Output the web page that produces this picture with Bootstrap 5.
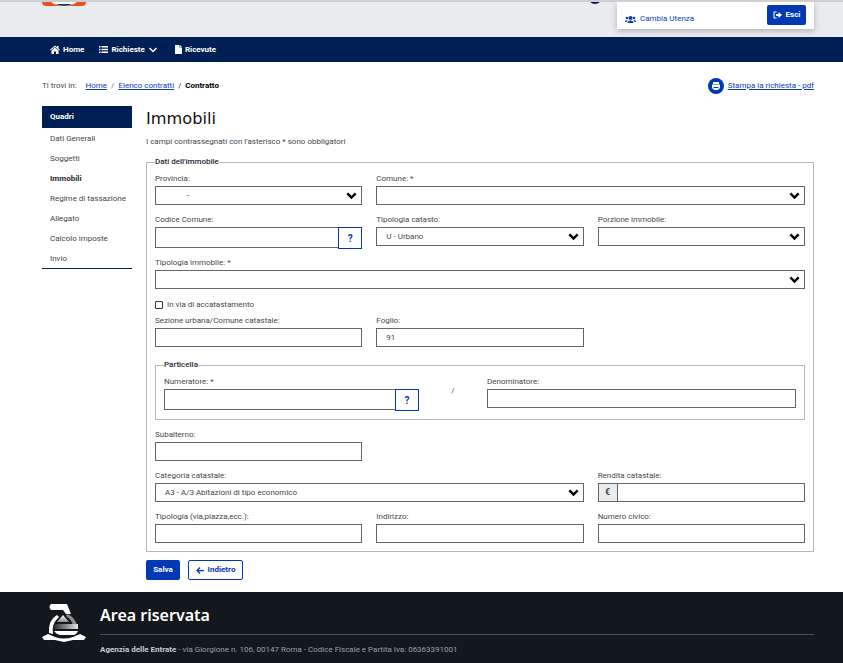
<!DOCTYPE html>
<html lang="it">
<head>
    <meta charset="UTF-8">
    <title>Contratto | Immobili</title>
    <link rel="stylesheet" href="https://cdn.jsdelivr.net/npm/bootstrap@5.3.0/dist/css/bootstrap.min.css">
    <style>
        body {
            font-family: Roboto, "Noto Sans", sans-serif;
            font-size: 8px;
            color: #3f474d;
            background: #fff;
        }
        a { color: #0b3bb5; }
        .top-strip {
            height: 37px;
            background: #e9ebef;
            border-top: 2px solid #cfcfcf;
            position: relative;
            overflow: hidden;
            padding: 0 29px 0 42px;
        }
        .top-logo { width: 44px; height: 4px; display: block; }
        .top-name {
            margin-left: 14px;
            margin-top: -11px;
            font-size: 13px;
            line-height: 14px;
            color: #1c2733;
        }
        .top-dot {
            position: absolute; left: 588px; top: -12px;
            width: 14px; height: 14px; border-radius: 50%;
            background: #001f54;
        }
        .user-box {
            position: absolute; left: 617px; top: 0;
            width: 197px; height: 27px;
            background: #fff;
            box-shadow: 0 2px 6px rgba(0,0,0,.25);
            padding: 3px 8px 0;
        }
        .user-link { color: #0b3bb5; font-size: 8px; text-decoration: none; height: 20px; padding-top: 8px; }
        .btn-esci, .btn-salva {
            background: #0039b3; color: #fff; border: 0; border-radius: 2px;
            font-size: 8px; font-weight: 700;
        }
        .btn-esci { width: 39px; height: 20px; padding: 0; }
        .main-nav { background: #001f54; height: 25px; padding: 0 42px 0 50px; }
        .main-nav a {
            color: #fff; font-size: 8px; font-weight: 700; text-decoration: none;
            margin-right: 15px;
        }
        .main-nav svg { margin-right: 3px; }
        .page-body { padding: 0 29px 0 42px; }
        .crumb-row { height: 44px; padding-top: 4px; }
        .crumb-row .breadcrumb { --bs-breadcrumb-margin-bottom: 0; --bs-breadcrumb-item-padding-x: 4px; font-size: 8px; }
        .crumb-label { margin-right: 9px; }
        .print-link { font-size: 8px; }
        .print-icon { margin-right: 4px; }
        .side-col { width: 90px; flex: none; margin-right: 14px; }
        .side-menu { border-bottom: 1px solid #001f54; height: 163px; }
        .side-menu a {
            display: block; height: 20px; line-height: 21px; padding-left: 8px;
            color: #3f474d; text-decoration: none; font-size: 8px;
        }
        .side-menu .side-head {
            height: 22px; line-height: 22px; background: #001f54; color: #fff; font-weight: 700;
        }
        .side-menu .side-now { font-weight: 700; color: #1c2733; }
        .main-col { flex: 1; min-width: 0; }
        .page-title {
            font-family: "DejaVu Sans", sans-serif;
            font-size: 16.2px; line-height: 24px; margin: 1px 0 0; color: #111; font-weight: 400;
        }
        .req-note { margin: 5px 0 0; line-height: 11px; height: 21px; }
        .box-set {
            border: 1px solid #b8b8b8;
            padding: 6px 8px 8px;
            margin: 0;
        }
        .box-legend {
            float: none; width: auto; font-size: 8px; line-height: 10px;
            margin: -13px 0 0 0; padding: 0; background: #fff;
            display: block; color: #1c2733; font-weight: 500;
        }
        .form-lines { --bs-gutter-x: 14px; --bs-gutter-y: 0; }
        .fld { height: 41px; }
        .fld-tall { height: 43px; }
        .fld-last { height: 32px; }
        .fld label { display: block; line-height: 10px; height: 13px; padding-top: 1px; margin: 0; font-size: 8px; }
        .fld .form-control, .fld .form-select {
            height: 19px; min-height: 0; border: 1px solid #666; border-radius: 0;
            font-size: 8px; padding: 0 9px; color: #3f474d; box-shadow: none;
        }
        .fld .form-select {
            background-size: 11px 11px; background-position: right 4px center; padding-right: 20px;
            background-image: url("data:image/svg+xml,%3csvg xmlns='http://www.w3.org/2000/svg' viewBox='0 0 16 16'%3e%3cpath fill='none' stroke='%23000' stroke-width='3.500' d='M2 5l6 6 6-6'/%3e%3c/svg%3e");
        }
        .help-btn {
            width: 24px; height: 22px; padding: 0; border: 1px solid #0039b3; border-radius: 0;
            background: #fff; color: #0039b3; font-weight: 700; font-size: 10px; flex: none;
        }
        .fld .help-line .form-control { height: 21px; border-right: 0; }
        .check-line { height: 17px; padding-bottom: 4px; line-height: 10px; }
        .check-line input { width: 8px; height: 8px; margin: 0 4px 0 0; border: 1px solid #333; border-radius: 1px; appearance: none; }
        .part-set {
            border: 1px solid #b8b8b8; padding: 6px 8px 2px; margin: 4px 0 9px;
        }
        .part-num { width: 255px; flex: none; }
        .part-slash { width: 68px; text-align: center; flex: none; padding-top: 9px; }
        .part-den { flex: 1; }
        .sub-field { width: 207px; }
        .euro-tag {
            width: 19px; height: 19px; background: #e9ebef; border: 1px solid #666; border-right: 0;
            flex: none; text-align: center; line-height: 17px; font-size: 9px; font-weight: 700;
        }
        .btn-salva { width: 34px; height: 20px; padding: 0; }
        .btn-back {
            width: 55px; height: 20px; padding: 0; border: 1px solid #0039b3; border-radius: 2px;
            background: #fff; color: #0039b3; font-size: 8px; font-weight: 700; margin-left: 8px;
        }
        .action-row { margin-top: 8px; }
        .site-foot { margin-top: 12px; height: 71px; background: #13181c; color: #9aa0a6; padding: 0 29px 0 42px; }
        .foot-logo { width: 44px; height: 38px; margin-top: 12px; flex: none; }
        .foot-right { margin-left: 14px; flex: 1; min-width: 0; }
        .foot-title { font-family: "Noto Sans", sans-serif; color: #fff; font-size: 16px; font-weight: 600; line-height: 20px; margin: 13px 0 0; height: 29px; }
        .foot-right hr { margin: 0; border-color: #4a4f53; opacity: 1; }
        .foot-text { margin: 10px 0 0; line-height: 10px; }
        .foot-text b { color: #c9cdd1; }
    </style>
</head>
<body>

<div class="top-strip d-flex">
    <svg class="top-logo" viewBox="0 0 44 4">
        <path d="M0 0H44V1Q43 4 40 4H4Q1 4 0 1z" fill="#e8501e"/>
        <path d="M9 0H35Q30 4 22 4T9 0z" fill="#fff"/>
        <path d="M14 2H30Q27 4 22 4T14 2z" fill="#1c3f7c"/>
    </svg>
    <div class="top-name">RLI Web</div>
    <div class="top-dot"></div>
    <div class="user-box d-flex justify-content-between">
        <a class="user-link d-flex align-items-center" href="#">
            <svg class="me-1" width="11" height="9" viewBox="0 0 22 18" fill="#0b3bb5"><circle cx="11" cy="6" r="4"/><circle cx="4" cy="6" r="2.6"/><circle cx="18" cy="6" r="2.6"/><path d="M5 16q0-5 6-5t6 5zM0 13q0-3 4-3l1 1q-2 1-2 3H0zM22 13q0-3-4-3l-1 1q2 1 2 3h3z"/></svg>
            Cambia Utenza
        </a>
        <button class="btn-esci d-flex align-items-center justify-content-center gap-1" type="button">
            <svg width="9" height="8" viewBox="0 0 18 16" fill="#fff"><path d="M11 2l7 6-7 6v-4H6V6h5zM7 1v2H3v10h4v2H1V1z"/></svg>
            Esci
        </button>
    </div>
</div>

<nav class="main-nav d-flex align-items-center">
    <a href="#" class="d-flex align-items-center">
        <svg width="10" height="9" viewBox="0 0 20 18" fill="#fff"><path d="M10 1L0 9.500l1.300 1.400L10 3.600l8.700 7.300L20 9.500l-3-2.600V2h-3v2.400zM3 11v7h5v-5h4v5h5v-7l-7-5.800z"/></svg>
        Home
    </a>
    <a href="#" class="d-flex align-items-center">
        <svg width="9" height="7" viewBox="0 0 18 14" fill="#fff"><path d="M0 0h3v3H0zM5 0h13v3H5zM0 5.500h3v3H0zM5 5.500h13v3H5zM0 11h3v3H0zM5 11h13v3H5z"/></svg>
        Richieste
        <svg class="ms-1" width="8" height="6" viewBox="0 0 16 12"><path fill="none" stroke="#fff" stroke-width="3" d="M1 2l7 7 7-7"/></svg>
    </a>
    <a href="#" class="d-flex align-items-center">
        <svg width="7" height="9" viewBox="0 0 14 18" fill="#fff"><path d="M0 0h9v5h5v13H0zM10 0l4 4h-4z"/></svg>
        Ricevute
    </a>
</nav>

<div class="page-body">
    <div class="crumb-row d-flex justify-content-between align-items-center">
        <div class="d-flex align-items-center">
            <span class="crumb-label">Ti trovi in:</span>
            <ol class="breadcrumb">
                <li class="breadcrumb-item"><a href="#">Home</a></li>
                <li class="breadcrumb-item"><a href="#">Elenco contratti</a></li>
                <li class="breadcrumb-item active text-black fw-bold">Contratto</li>
            </ol>
        </div>
        <a class="print-link d-flex align-items-center" href="#">
            <svg class="print-icon" width="16" height="16" viewBox="0 0 16 16"><circle cx="8" cy="8" r="8" fill="#0039b3"/><path fill="#fff" d="M5 4h6v2H5zM4 6.500h8v4h-1.500V9h-5v1.500H4zM5.500 10h5v2h-5z"/></svg>
            Stampa la richiesta - pdf
        </a>
    </div>

    <div class="d-flex">
        <div class="side-col">
            <div class="side-menu">
                <a href="#" class="side-head">Quadri</a>
                <a href="#">Dati Generali</a>
                <a href="#">Soggetti</a>
                <a href="#" class="side-now">Immobili</a>
                <a href="#">Regime di tassazione</a>
                <a href="#">Allegato</a>
                <a href="#">Calcolo imposte</a>
                <a href="#">Invio</a>
            </div>
        </div>
        <div class="main-col">
            <h1 class="page-title">Immobili</h1>
            <p class="req-note">I campi contrassegnati con l'asterisco * sono obbligatori</p>
            <fieldset class="box-set">
                <legend class="box-legend">Dati dell'immobile</legend>
                <div class="row form-lines">
                    <div class="col-4 fld">
                        <label>Provincia:</label>
                        <select class="form-select"><option>&nbsp;&nbsp;&nbsp;&nbsp;&nbsp;&nbsp;&nbsp;&nbsp;&nbsp;&nbsp;&nbsp;-</option></select>
                    </div>
                    <div class="col-8 fld">
                        <label>Comune: *</label>
                        <select class="form-select"><option></option></select>
                    </div>
                    <div class="col-4 fld fld-tall">
                        <label>Codice Comune:</label>
                        <div class="d-flex help-line">
                            <input class="form-control" type="text">
                            <button class="help-btn" type="button">?</button>
                        </div>
                    </div>
                    <div class="col-4 fld fld-tall">
                        <label>Tipologia catasto:</label>
                        <select class="form-select"><option>U - Urbano</option></select>
                    </div>
                    <div class="col-4 fld fld-tall">
                        <label>Porzione immobile:</label>
                        <select class="form-select"><option></option></select>
                    </div>
                    <div class="col-12 fld">
                        <label>Tipologia immobile: *</label>
                        <select class="form-select"><option></option></select>
                    </div>
                    <div class="col-12 check-line d-flex align-items-center">
                        <input type="checkbox" id="accat"><span>In via di accatastamento</span>
                    </div>
                    <div class="col-4 fld">
                        <label>Sezione urbana/Comune catastale:</label>
                        <input class="form-control" type="text">
                    </div>
                    <div class="col-4 fld">
                        <label>Foglio:</label>
                        <input class="form-control" type="text" value="91">
                    </div>
                </div>
                <fieldset class="part-set">
                    <legend class="box-legend">Particella</legend>
                    <div class="d-flex">
                        <div class="part-num fld">
                            <label>Numeratore: *</label>
                            <div class="d-flex help-line">
                                <input class="form-control" type="text">
                                <button class="help-btn" type="button">?</button>
                            </div>
                        </div>
                        <div class="part-slash">/</div>
                        <div class="part-den fld">
                            <label>Denominatore:</label>
                            <input class="form-control" type="text">
                        </div>
                    </div>
                </fieldset>
                <div class="sub-field fld">
                    <label>Subalterno:</label>
                    <input class="form-control" type="text">
                </div>
                <div class="row form-lines">
                    <div class="col-8 fld">
                        <label>Categoria catastale:</label>
                        <select class="form-select"><option>A3 - A/3 Abitazioni di tipo economico</option></select>
                    </div>
                    <div class="col-4 fld">
                        <label>Rendita catastale:</label>
                        <div class="d-flex">
                            <span class="euro-tag">€</span>
                            <input class="form-control" type="text">
                        </div>
                    </div>
                    <div class="col-4 fld fld-last">
                        <label>Tipologia (via,piazza,ecc.):</label>
                        <input class="form-control" type="text">
                    </div>
                    <div class="col-4 fld fld-last">
                        <label>Indirizzo:</label>
                        <input class="form-control" type="text">
                    </div>
                    <div class="col-4 fld fld-last">
                        <label>Numero civico:</label>
                        <input class="form-control" type="text">
                    </div>
                </div>
            </fieldset>
            <div class="action-row d-flex">
                <button class="btn-salva" type="button">Salva</button>
                <button class="btn-back d-flex align-items-center justify-content-center gap-1" type="button">
                    <svg width="8" height="7" viewBox="0 0 16 14"><path fill="none" stroke="#0039b3" stroke-width="2.500" d="M8 1L2 7l6 6M2 7h14"/></svg>
                    Indietro
                </button>
            </div>
        </div>
    </div>
</div>

<footer class="site-foot d-flex">
    <svg class="foot-logo" viewBox="0 0 44 38">
        <defs>
            <linearGradient id="logoBand" x1="0" x2="1" y1="0" y2="0">
                <stop offset="0" stop-color="#2b2e31"/>
                <stop offset="1" stop-color="#e6e6e6"/>
            </linearGradient>
            <linearGradient id="logoDome" x1="0" x2="0" y1="0" y2="1">
                <stop offset="0" stop-color="#fff"/>
                <stop offset="1" stop-color="#8b8e91"/>
            </linearGradient>
        </defs>
        <path fill="#fff" d="M9 0H25L29 10H24L21 6H9Q6 3 9 0z"/>
        <path fill="#8b8e91" d="M25 10Q33 13 35 21H31Q29 15 24 12z"/>
        <path fill="url(#logoDome)" d="M21 11L27 18H15z"/>
        <path fill="#fff" d="M15 11Q6 16 7 29L11 30Q9 20 17 13z"/>
        <path fill="url(#logoBand)" d="M13 20H36V25H12Q12 22 13 20z"/>
        <path fill="#fff" d="M12 27H36Q35 30 32 31L18 31Q14 30 12 27z"/>
        <path fill="#fff" d="M0 33L6 30 13 33Q22 36 31 33L38 30 44 33 42 36H31L22 38 13 36H2z"/>
    </svg>
    <div class="foot-right">
        <div class="foot-title">Area riservata</div>
        <hr>
        <p class="foot-text"><b>Agenzia delle Entrate</b> - via Giorgione n. 106, 00147 Roma - Codice Fiscale e Partita Iva: 06363391001</p>
    </div>
</footer>

</body>
</html>
